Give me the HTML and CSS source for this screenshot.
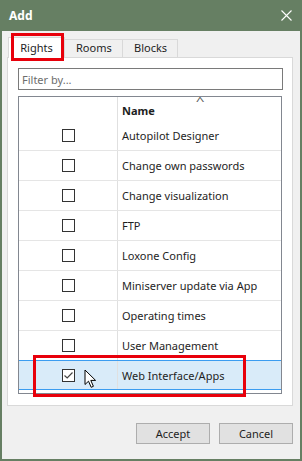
FILE: index.html
```html
<!DOCTYPE html>
<html lang="en">
<head>
  <meta charset="UTF-8" />
  <title>Add</title>
  <link rel="stylesheet" href="styles.css">
</head>
<body>
  <div class="window">
    <div class="titlebar">
      <span class="title">Add</span>
      <svg class="close" width="11" height="11" viewBox="0 0 11 11">
        <path d="M0.5 0.5 L10.5 10.5 M10.5 0.5 L0.5 10.5" stroke="#fff" stroke-width="1.1" fill="none"/>
      </svg>
    </div>

    <div class="content">
      <div class="tabs">
        <div class="tab active">Rights</div>
        <div class="tab">Rooms</div>
        <div class="tab">Blocks</div>
        <div class="mark mark-tab"></div>
      </div>

      <div class="panel">
        <input class="filter" type="text" placeholder="Filter by..." />

        <div class="grid">
          <div class="grid-head">
            <div class="col-check"></div>
            <div class="col-name">Name<span class="sort">^</span></div>
          </div>
          <div class="row"><div class="col-check"><span class="box"></span></div><div class="col-name">Autopilot Designer</div></div>
          <div class="row"><div class="col-check"><span class="box"></span></div><div class="col-name">Change own passwords</div></div>
          <div class="row"><div class="col-check"><span class="box"></span></div><div class="col-name">Change visualization</div></div>
          <div class="row"><div class="col-check"><span class="box"></span></div><div class="col-name">FTP</div></div>
          <div class="row"><div class="col-check"><span class="box"></span></div><div class="col-name">Loxone Config</div></div>
          <div class="row"><div class="col-check"><span class="box"></span></div><div class="col-name">Miniserver update via App</div></div>
          <div class="row"><div class="col-check"><span class="box"></span></div><div class="col-name">Operating times</div></div>
          <div class="row"><div class="col-check"><span class="box"></span></div><div class="col-name">User Management</div></div>
          <div class="row selected">
            <div class="col-check">
              <span class="box checked">
                <svg width="11" height="11" viewBox="0 0 11 11"><path d="M1.5 5.5 L4.2 8 L9.5 2.5" stroke="#444" stroke-width="1.2" fill="none"/></svg>
              </span>
              <svg class="cursor" width="13" height="20" viewBox="0 0 13 20">
                <path d="M1 1 L1 15.5 L4.5 12.2 L7.2 18.3 L9.4 17.3 L6.8 11.4 L11.6 11.4 Z" fill="#fff" stroke="#000" stroke-width="1" stroke-linejoin="miter"/>
              </svg>
            </div>
            <div class="col-name">Web Interface/Apps</div>
          </div>
          <div class="mark mark-row"></div>
        </div>
      </div>

      <div class="buttons">
        <button class="btn">Accept</button>
        <button class="btn">Cancel</button>
      </div>
    </div>
  </div>
</body>
</html>
```

FILE: styles.css
```css
* {
  box-sizing: border-box;
  font-family: 'Noto Sans', 'Open Sans', sans-serif;
}

body {
  margin: 0;
  background: #f0f0f0;
}

.window {
  width: 302px;
  height: 461px;
  border: 2px solid #667f63;
  border-top: none;
  display: flex;
  flex-direction: column;
  background: #f0f0f0;
}

.titlebar {
  height: 31px;
  margin: 0 -2px;
  background: #667f63;
  display: flex;
  align-items: center;
  justify-content: space-between;
  padding: 0 10px 1px 9px;
  color: #fff;
}

.title {
  font-size: 12px;
  font-weight: bold;
}

.close {
  display: block;
}

.content {
  flex: 1;
  padding: 2px 7px 0 5px;
  color: #1e1e1e;
  font-size: 11px;
}

.tabs {
  position: relative;
  display: flex;
  align-items: flex-end;
  height: 24px;
  padding-left: 1px;
}

.tab {
  height: 18px;
  padding: 0 11px;
  border: 1px solid #d9d9d9;
  border-bottom: none;
  border-left: none;
  background: #f0f0f0;
  line-height: 16px;
  font-size: 11px;
  text-align: center;
}

.tab:nth-child(2) {
  width: 58px;
}

.tab:nth-child(3) {
  width: 55px;
}

.tab.active {
  width: 57px;
  height: 21px;
  border-left: 1px solid #d9d9d9;
  background: #fff;
  line-height: 19px;
  margin-bottom: -1px;
  position: relative;
  z-index: 1;
}

.mark {
  position: absolute;
  border: 3px solid #e8000b;
  pointer-events: none;
  z-index: 2;
}

.mark-tab {
  left: 4px;
  top: 0;
  width: 53px;
  height: 28px;
}

.panel {
  height: 349px;
  background: #fff;
  border: 1px solid #d9d9d9;
  padding: 10px 10px 0 10px;
}

.filter {
  display: block;
  width: 265px;
  height: 22px;
  border: 1px solid #7a7a7a;
  padding: 0 3px;
  font-size: 11px;
  outline: none;
  color: #1e1e1e;
}

.filter::placeholder {
  color: #6d6d6d;
}

.grid {
  position: relative;
  margin-top: 6px;
  width: 264px;
  height: 298px;
  border: 1px solid #828790;
}

.grid-head,
.row {
  display: flex;
}

.grid-head {
  height: 24px;
  font-weight: bold;
}

.row {
  height: 30px;
  border-bottom: 1px solid #e5e5e5;
}

.col-check {
  width: 99px;
  border-right: 1px solid #e0e0e0;
  display: flex;
  align-items: center;
  justify-content: center;
  position: relative;
}

.col-name {
  flex: 1;
  display: flex;
  align-items: center;
  padding-left: 4px;
  position: relative;
}

.grid-head .col-name {
  align-items: flex-end;
  padding-bottom: 3px;
}

.sort {
  position: absolute;
  left: 79px;
  top: -4px;
  font-weight: normal;
  font-size: 11px;
  color: #606060;
  transform: scaleX(1.4);
}

.box {
  width: 13px;
  height: 13px;
  border: 1px solid #333;
  background: #fff;
  display: flex;
  align-items: center;
  justify-content: center;
  margin-left: 1px;
}

.box svg {
  display: block;
}

.row.selected {
  background: #d9ebf9;
  border-top: 1px solid #3c9cf0;
  border-bottom: 1px solid #3c9cf0;
  margin-top: -1px;
}

.cursor {
  position: absolute;
  left: 65px;
  top: 8px;
}

.mark-row {
  left: 14px;
  top: 258px;
  width: 213px;
  height: 42px;
}

.buttons {
  display: flex;
  justify-content: flex-end;
  gap: 9px;
  margin-top: 17px;
}

.btn {
  width: 74px;
  height: 21px;
  background: #e1e1e1;
  border: 1px solid #adadad;
  font-size: 11px;
  color: #1e1e1e;
  padding: 0;
}
```
